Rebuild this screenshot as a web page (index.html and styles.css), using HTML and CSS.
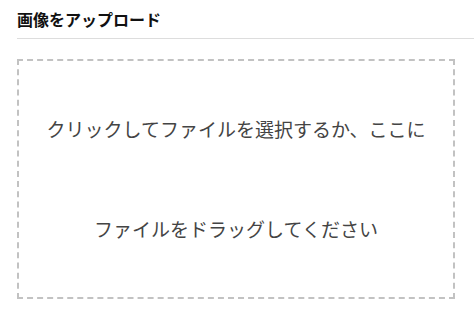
FILE: index.html
```html
<!DOCTYPE html>
<html lang="ja">
<head>
    <meta charset="UTF-8">
    <meta name="viewport" content="width=device-width, initial-scale=1.0">
    <title>画像をアップロード</title>
    <link rel="stylesheet" href="styles.css">
</head>
<body>

    <div class="upload-panel">
        <h2 class="upload-title">画像をアップロード</h2>
        <div class="dropzone" id="dropzone">
            クリックしてファイルを選択するか、ここに<br>ファイルをドラッグしてください
        </div>
    </div>

</body>
</html>
```

FILE: styles.css
```css
body {
    margin: 0;
    padding: 0;
    background-color: #ffffff;
    font-family: "Noto Sans CJK JP", "Noto Sans", sans-serif;
    color: #333;
}

.upload-panel {
    padding: 7px 1px 0 17px;
}

.upload-title {
    margin: 0;
    padding-bottom: 7px;
    font-size: 16px;
    line-height: 24px;
    font-weight: bold;
    color: #111;
    border-bottom: 1px solid #dddddd;
}

/* ドロップエリア */
.dropzone {
    margin: 20px 19px 0 0;
    padding: 18px 0;
    border: 2px dashed #c2c2c2;
    text-align: center;
    font-size: 19px;
    line-height: 100px;
    color: #444;
    cursor: pointer;
}
```
